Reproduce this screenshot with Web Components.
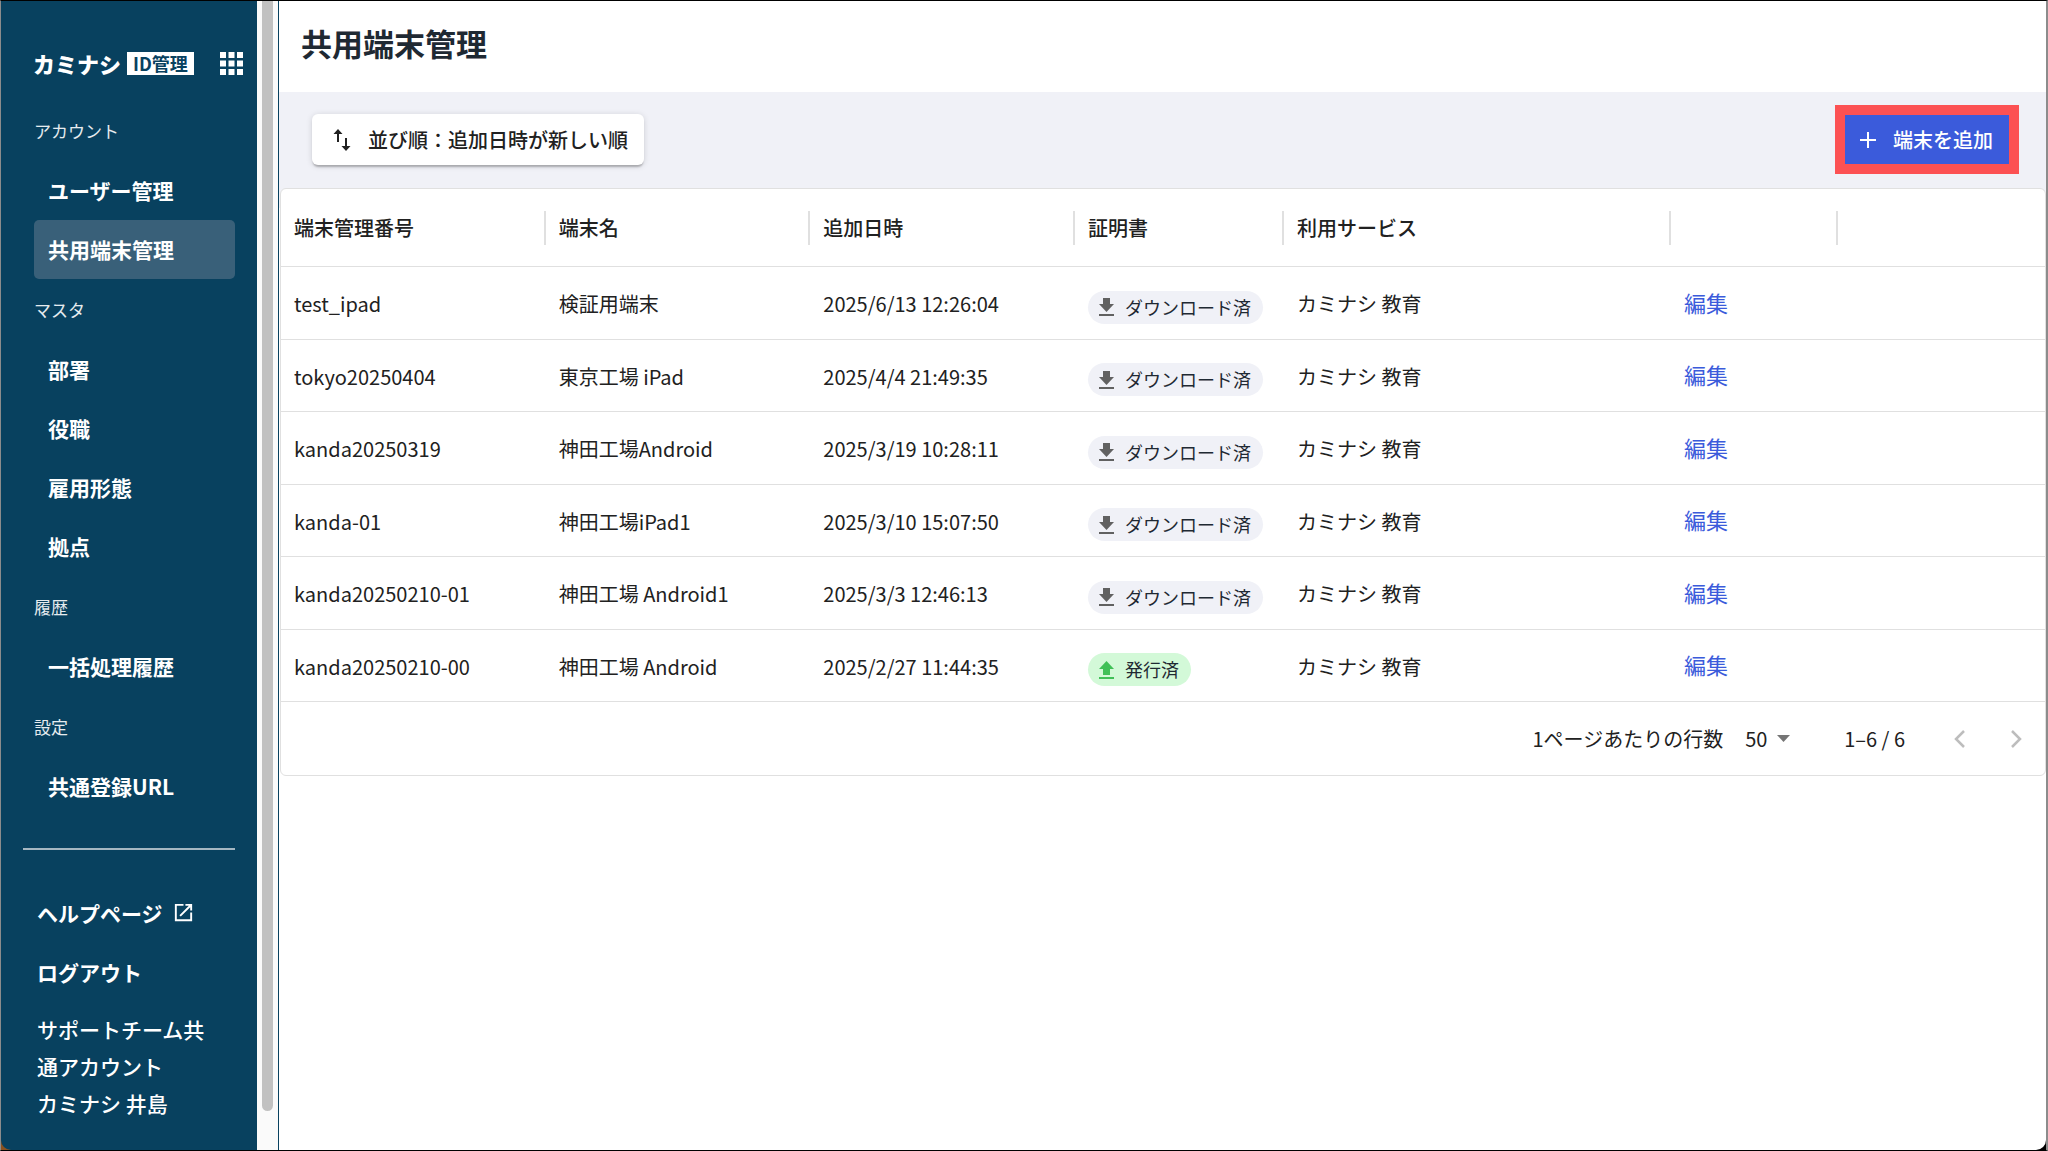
<!DOCTYPE html>
<html lang="ja">
<head>
<meta charset="utf-8">
<meta name="viewport" content="width=device-width, initial-scale=1">
<title>共用端末管理</title>
<style>
  html, body {
    margin: 0;
    height: 100%;
  }
  body {
    --navy: #08415f;
    --line: #e0e0e0;
    --panel: #f0f1f7;
    --blue: #3b5bdb;
    font-family: "Noto Sans CJK JP", "Noto Sans", sans-serif;
    font-size: 20px;
    color: #212121;
    background: #fff;
  }
</style>
</head>
<body>
<app-shell>
  <side-nav slot="nav">
    <nav-group label="アカウント">
      <nav-item>ユーザー管理</nav-item>
      <nav-item active>共用端末管理</nav-item>
    </nav-group>
    <nav-group label="マスタ">
      <nav-item>部署</nav-item>
      <nav-item>役職</nav-item>
      <nav-item>雇用形態</nav-item>
      <nav-item>拠点</nav-item>
    </nav-group>
    <nav-group label="履歴">
      <nav-item>一括処理履歴</nav-item>
    </nav-group>
    <nav-group label="設定">
      <nav-item>共通登録URL</nav-item>
    </nav-group>
  </side-nav>
  <page-header>共用端末管理</page-header>
  <tool-bar></tool-bar>
  <device-table></device-table>
</app-shell>

<script>
(function () {
  function attach(el, html) {
    const template = document.createElement("template");
    template.innerHTML = html;
    el.attachShadow({ mode: "open" });
    el.shadowRoot.appendChild(template.content.cloneNode(true));
  }

  class AppShell extends HTMLElement {
    constructor() {
      super();
      attach(this, `
        <style>
          :host {
            display: grid;
            grid-template-columns: auto auto minmax(0, 1fr);
            box-sizing: border-box;
            height: 100vh;
            border-style: solid;
            border-width: 1px 2px 1px 1px;
            border-color: #000 #8c8c8c #000 #8c8c8c;
            background: linear-gradient(90deg, #8a5220 20px, #000 20px);
            overflow: hidden;
          }
          .track {
            box-sizing: border-box;
            width: 21px;
            padding: 0 5px 39px 5px;
            background: #fafafa;
          }
          .thumb {
            height: 100%;
            border-radius: 0 0 6px 6px;
            background: #c1c1c1;
          }
          main {
            border-left: 1px solid var(--navy);
            border-bottom-right-radius: 10px;
            background: #fff;
            min-width: 0;
          }
        </style>
        <slot name="nav"></slot>
        <div class="track"><div class="thumb"></div></div>
        <main><slot></slot></main>
      `);
    }
  }

  class SideNav extends HTMLElement {
    constructor() {
      super();
      attach(this, `
        <style>
          :host {
            display: block;
            box-sizing: border-box;
            width: 256px;
            padding: 50px 22px 0 22px;
            color: #fff;
            background: var(--navy);
            border-bottom-left-radius: 10px;
          }
          header {
            display: flex;
            align-items: center;
            height: 24px;
            margin: 0 -8px 25px 10px;
          }
          .logo {
            display: flex;
            align-items: center;
            gap: 6px;
            font-size: 22px;
            font-weight: 900;
            line-height: 24px;
            white-space: nowrap;
          }
          .badge {
            padding: 0 6px;
            font-size: 18px;
            font-weight: 700;
            line-height: 23px;
            color: var(--navy);
            background: #fff;
          }
          button {
            margin: 0 0 0 auto;
            padding: 0;
            border: 0;
            background: none;
            color: inherit;
            line-height: 0;
          }
          hr {
            height: 2px;
            margin: 32px 0 33px 0;
            border: 0;
            background: #a5b7c2;
          }
          .links a {
            display: flex;
            align-items: center;
            gap: 9px;
            height: 59px;
            padding-left: 14px;
            font-size: 21px;
            font-weight: 700;
            color: #fff;
            text-decoration: none;
          }
          .user {
            margin: 10px 14px 0 14px;
            font-size: 21px;
            font-weight: 500;
            line-height: 37px;
          }
        </style>
        <header>
          <div class="logo">カミナシ<span class="badge">ID管理</span></div>
          <button type="button" aria-label="アプリ一覧">
            <svg width="23" height="23" viewBox="0 0 23 23" fill="currentColor">
              <path d="M0 0h6v6H0zM8.500 0h6v6h-6zM17 0h6v6h-6zM0 8.500h6v6H0zM8.500 8.500h6v6h-6zM17 8.500h6v6h-6zM0 17h6v6H0zM8.500 17h6v6h-6zM17 17h6v6h-6z"/>
            </svg>
          </button>
        </header>
        <nav><slot></slot></nav>
        <hr>
        <div class="links">
          <a href="#help">ヘルプページ
            <svg width="23" height="23" viewBox="0 0 24 24" fill="#fff">
              <path d="M19 19H5V5h7V3H3v18h18v-9h-2v7zM14 3v2h3.590l-9.830 9.830 1.410 1.410L19 6.410V10h2V3h-7z"/>
            </svg>
          </a>
          <a href="#logout">ログアウト</a>
        </div>
        <div class="user">サポートチーム共通アカウント<br>カミナシ 井島</div>
      `);
    }
  }

  class NavGroup extends HTMLElement {
    constructor() {
      super();
      attach(this, `
        <style>
          :host {
            display: block;
            padding-left: 11px;
          }
          h2 {
            margin: 0;
            font-size: 17px;
            font-weight: 400;
            line-height: 61px;
            color: #e6ecef;
          }
        </style>
        <h2>${this.getAttribute("label")}</h2>
        <slot></slot>
      `);
    }
  }

  class NavItem extends HTMLElement {
    constructor() {
      super();
      attach(this, `
        <style>
          :host {
            display: block;
          }
          a {
            display: block;
            padding-left: 14px;
            border-radius: 5px;
            font-size: 21px;
            font-weight: 700;
            line-height: 59px;
            color: #fff;
            text-decoration: none;
          }
          :host([active]) a {
            background: #396079;
          }
        </style>
        <a href="#"><slot></slot></a>
      `);
    }
  }

  class PageHeader extends HTMLElement {
    constructor() {
      super();
      attach(this, `
        <style>
          :host {
            display: block;
            padding: 0 22px;
          }
          h1 {
            margin: 0;
            padding-bottom: 7px;
            font-size: 31px;
            font-weight: 700;
            line-height: 84px;
            color: #1f2933;
          }
        </style>
        <h1><slot></slot></h1>
      `);
    }
  }

  class ToolBar extends HTMLElement {
    constructor() {
      super();
      attach(this, `
        <style>
          :host {
            display: flex;
            align-items: center;
            justify-content: space-between;
            padding: 13px 27px 14px 33px;
            background: var(--panel);
          }
          button {
            display: flex;
            align-items: center;
            margin: 0;
            border: 0;
            font: inherit;
            font-weight: 500;
            line-height: 29px;
            white-space: nowrap;
          }
          .sort {
            gap: 15px;
            padding: 11px 16px 11px 19px;
            border-radius: 6px;
            color: #212121;
            background: #fff;
            box-shadow: 0 3px 2px -1px rgba(0, 0, 0, .24), 0 1px 6px rgba(0, 0, 0, .14);
          }
          .add {
            gap: 13px;
            padding: 10px 16px 10px 11px;
            color: #fff;
            background: var(--blue);
          }
          .mark {
            border: 10px solid #fc5153;
          }
        </style>
        <button type="button" class="sort">
          <svg width="22" height="24" viewBox="0 0 22 24" fill="currentColor">
            <path d="M7 1 2.500 6H6v8h2V6h3.500zM14 10v8h-3.500l4.500 5 4.500-5H16v-8z"/>
          </svg>
          並び順：追加日時が新しい順
        </button>
        <div class="mark">
          <button type="button" class="add">
            <svg width="24" height="24" viewBox="0 0 24 24" fill="currentColor">
              <path d="M11 4h2v7h7v2h-7v7h-2v-7H4v-2h7z"/>
            </svg>
            端末を追加
          </button>
        </div>
      `);
    }
  }

  class StatusChip extends HTMLElement {
    constructor() {
      super();
      attach(this, `
        <style>
          :host {
            display: inline-flex;
            align-items: center;
            gap: 10px;
            height: 33px;
            padding: 0 12px 0 10px;
            border-radius: 17px;
            font-size: 18px;
            line-height: 33px;
            vertical-align: middle;
            color: #1f2933;
            background: var(--panel);
          }
          svg {
            fill: #616161;
          }
          .down { display: block; }
          .up { display: none; }
          :host([kind="issued"]) { background: #d3f9d8; }
          :host([kind="issued"]) svg { fill: #40c057; }
          :host([kind="issued"]) .down { display: none; }
          :host([kind="issued"]) .up { display: block; }
        </style>
        <svg width="17" height="18" viewBox="0 0 17 18">
          <path class="down" d="M5 0h7v6h4l-7.500 8L1 6h4z"/>
          <path class="up" d="M5 14h7V8h4L8.500 0 1 8h4z"/>
          <path d="M1 16h15v2H1z"/>
        </svg>
        <span><slot></slot></span>
      `);
    }
  }

  const devices = [
    ["test_ipad", "検証用端末", "2025/6/13 12:26:04", "downloaded"],
    ["tokyo20250404", "東京工場 iPad", "2025/4/4 21:49:35", "downloaded"],
    ["kanda20250319", "神田工場Android", "2025/3/19 10:28:11", "downloaded"],
    ["kanda-01", "神田工場iPad1", "2025/3/10 15:07:50", "downloaded"],
    ["kanda20250210-01", "神田工場 Android1", "2025/3/3 12:46:13", "downloaded"],
    ["kanda20250210-00", "神田工場 Android", "2025/2/27 11:44:35", "issued"],
  ];
  const statusText = { downloaded: "ダウンロード済", issued: "発行済" };

  class DeviceTable extends HTMLElement {
    constructor() {
      super();
      const rows = devices.map(([id, name, added, status]) => `
        <tr>
          <td>${id}</td>
          <td>${name}</td>
          <td>${added}</td>
          <td class="status"><status-chip kind="${status}">${statusText[status]}</status-chip></td>
          <td>カミナシ 教育</td>
          <td class="edit"><a href="#edit">編集</a></td>
          <td></td>
        </tr>`).join("");

      attach(this, `
        <style>
          :host {
            display: block;
            padding-left: 1px;
            background: linear-gradient(var(--panel) 20px, #fff 20px);
          }
          .card {
            border: 1px solid var(--line);
            border-radius: 6px;
            background: #fff;
          }
          table {
            width: 100%;
            table-layout: fixed;
            border-collapse: separate;
            border-spacing: 0;
          }
          .w4 { width: 209px; }
          .w5 { width: 387px; }
          .w6 { width: 167px; }
          .w7 { width: 207px; }
          th, td {
            box-sizing: border-box;
            padding: 0 13px;
            border-bottom: 1px solid var(--line);
            font-weight: 400;
            text-align: left;
            white-space: nowrap;
          }
          th {
            height: 78px;
            padding-right: 0;
            font-weight: 500;
          }
          th div {
            height: 34px;
            line-height: 34px;
            border-right: 2px solid var(--line);
          }
          th:last-child div { border: 0; }
          td {
            height: 73px;
            padding-top: 1px;
          }
          tr:nth-child(even) td { height: 72px; }
          .status { padding-top: 5px; padding-right: 0; line-height: 33px; }
          .edit { padding-bottom: 4px; font-size: 22px; }
          .edit a { color: var(--blue); text-decoration: none; }
          footer {
            display: flex;
            align-items: center;
            justify-content: flex-end;
            height: 73px;
            padding-right: 16px;
          }
          label { margin-right: 22px; }
          .pick {
            display: flex;
            align-items: center;
            margin-right: 54px;
          }
          select {
            appearance: none;
            width: 32px;
            padding: 0;
            border: 0;
            font: inherit;
            color: inherit;
            background: none;
          }
          button {
            width: 26px;
            padding: 0;
            border: 0;
            background: none;
            color: #bdbdbd;
            line-height: 0;
          }
          .prev { margin: 0 30px 0 42px; }
        </style>
        <div class="card">
          <table>
            <colgroup>
              <col><col><col>
              <col class="w4"><col class="w5"><col class="w6"><col class="w7">
            </colgroup>
            <thead>
              <tr>
                <th><div>端末管理番号</div></th>
                <th><div>端末名</div></th>
                <th><div>追加日時</div></th>
                <th><div>証明書</div></th>
                <th><div>利用サービス</div></th>
                <th><div></div></th>
                <th><div></div></th>
              </tr>
            </thead>
            <tbody>${rows}</tbody>
          </table>
          <footer>
            <label for="rows">1ページあたりの行数</label>
            <div class="pick">
              <select id="rows"><option>50</option></select>
              <svg width="13" height="7" viewBox="0 0 13 7"><path d="M0 0h13L6.500 7z" fill="#757575"/></svg>
            </div>
            <span>1–6 / 6</span>
            <button type="button" class="prev" aria-label="前のページ" disabled>
              <svg width="26" height="26" viewBox="0 0 26 26" fill="none" stroke="currentColor" stroke-width="2.500"><path d="M17 5 9 13l8 8"/></svg>
            </button>
            <button type="button" aria-label="次のページ" disabled>
              <svg width="26" height="26" viewBox="0 0 26 26" fill="none" stroke="currentColor" stroke-width="2.500"><path d="m9 5 8 8-8 8"/></svg>
            </button>
          </footer>
        </div>
      `);
    }
  }

  customElements.define("app-shell", AppShell);
  customElements.define("side-nav", SideNav);
  customElements.define("nav-group", NavGroup);
  customElements.define("nav-item", NavItem);
  customElements.define("page-header", PageHeader);
  customElements.define("tool-bar", ToolBar);
  customElements.define("status-chip", StatusChip);
  customElements.define("device-table", DeviceTable);
})();
</script>
</body>
</html>
